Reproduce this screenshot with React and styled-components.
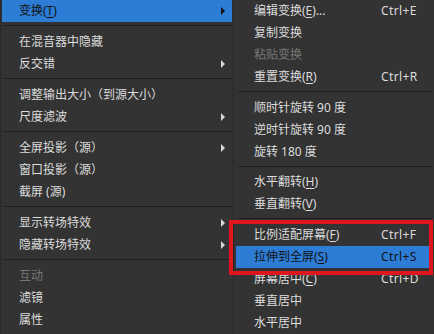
import React from 'react'
import styled, { createGlobalStyle } from 'styled-components'

const Global = createGlobalStyle`
  html, body {
    margin: 0;
    padding: 0;
    background: #333333;
  }
  body {
    font-family: "Noto Sans", "Noto Sans CJK SC", sans-serif;
    font-size: 12px;
  }
`

const Screen = styled.div`
  position: relative;
  display: flex;
  width: 434px;
  height: 334px;
  overflow: hidden;
  background: #333333;
`

const Menu = styled.div`
  display: flex;
  flex-direction: column;
  box-sizing: border-box;
  width: ${p => p.$width || 'auto'};
  flex: ${p => (p.$width ? '0 0 auto' : '1 1 auto')};
  padding: 0 ${p => p.$padRight || 2}px 0 ${p => p.$padLeft || 2}px;
  border-left: 1px solid #282828;
  background: #333333;
`

const Item = styled.div`
  position: relative;
  display: grid;
  grid-template-columns: ${p => p.$cols || '1fr'};
  align-items: center;
  height: 22px;
  line-height: 22px;
  padding-left: ${p => p.$indent || 17}px;
  white-space: nowrap;
  color: ${p => (p.$active ? '#121212' : p.$disabled ? '#767676' : '#dcdcdc')};
  background: ${p => (p.$active ? '#2d7dd7' : 'transparent')};

  u {
    text-decoration-thickness: 1px;
    text-underline-offset: 2px;
  }
`

const Arrow = styled.span`
  position: absolute;
  right: 7px;
  top: 7px;
  width: 0;
  height: 0;
  border-top: 4px solid transparent;
  border-bottom: 4px solid transparent;
  border-left: 4px solid ${p => (p.$active ? '#101010' : '#d8d8d8')};
`

const Separator = styled.div`
  height: 1px;
  margin: 3px 0 5px 2px;
  background: #1f1f1f;
  border-bottom: 0;
`

const Shortcut = styled.span`
  letter-spacing: 0.4px;
`

const Highlight = styled.div`
  position: absolute;
  left: 229px;
  top: 220px;
  width: 204px;
  height: 55px;
  box-sizing: border-box;
  border: 4px solid #e0161e;
  pointer-events: none;
`

const left = [
  { label: <>变换(<u>T</u>)</>, sub: true, active: true },
  'sep',
  { label: '在混音器中隐藏' },
  { label: '反交错', sub: true },
  'sep',
  { label: '调整输出大小（到源大小）' },
  { label: '尺度滤波', sub: true },
  'sep',
  { label: '全屏投影（源）', sub: true },
  { label: '窗口投影（源）' },
  { label: '截屏 (源)' },
  'sep',
  { label: '显示转场特效', sub: true },
  { label: '隐藏转场特效', sub: true },
  'sep',
  { label: '互动', disabled: true },
  { label: '滤镜' },
  { label: '属性' },
]

const right = [
  { label: <>编辑变换(<u>E</u>)...</>, key: 'Ctrl+E' },
  { label: '复制变换' },
  { label: '粘贴变换', disabled: true },
  { label: <>重置变换(<u>R</u>)</>, key: 'Ctrl+R' },
  'sep',
  { label: '顺时针旋转 90 度' },
  { label: '逆时针旋转 90 度' },
  { label: '旋转 180 度' },
  'sep',
  { label: <>水平翻转(<u>H</u>)</> },
  { label: <>垂直翻转(<u>V</u>)</> },
  'sep',
  { label: <>比例适配屏幕(<u>F</u>)</>, key: 'Ctrl+F' },
  { label: <>拉伸到全屏(<u>S</u>)</>, key: 'Ctrl+S', active: true },
  { label: <>屏幕居中(<u>C</u>)</>, key: 'Ctrl+D' },
  { label: '垂直居中' },
  { label: '水平居中' },
]

export default function App() {
  return (
    <Screen>
      <Global />
      <Menu $width="233px" $padLeft={1} $padRight={1}>
        {left.map((it, i) =>
          it === 'sep' ? (
            <Separator key={i} />
          ) : (
            <Item key={i} $active={it.active} $disabled={it.disabled}>
              <span>{it.label}</span>
              {it.sub && <Arrow $active={it.active} />}
            </Item>
          )
        )}
      </Menu>
      <Menu>
        {right.map((it, i) =>
          it === 'sep' ? (
            <Separator key={i} />
          ) : (
            <Item
              key={i}
              $cols="127px auto"
              $indent={18}
              $active={it.active}
              $disabled={it.disabled}
            >
              <span>{it.label}</span>
              {it.key && <Shortcut>{it.key}</Shortcut>}
            </Item>
          )
        )}
      </Menu>
      <Highlight />
    </Screen>
  )
}
